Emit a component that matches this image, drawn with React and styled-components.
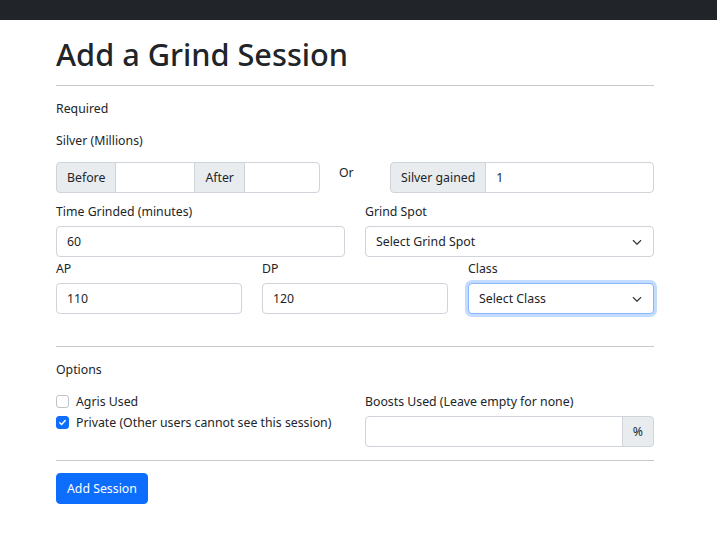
import React from "react";
import styled, { createGlobalStyle } from "styled-components";

const GlobalStyle = createGlobalStyle`
  html, body {
    margin: 0;
    padding: 0;
    background: #fff;
    font-family: "Noto Sans", "Open Sans", sans-serif;
    color: #212529;
    font-size: 12.3px;
  }
  * { box-sizing: border-box; }
`;

const Navbar = styled.div`
  height: 20px;
  background: #212529;
`;

const Container = styled.div`
  width: 598px;
  margin-left: 56px;
  display: flex;
  flex-direction: column;
`;

const Title = styled.h1`
  margin: 14px 0 0;
  font-size: 30.7px;
  line-height: 40px;
  font-weight: 500;
`;

const Rule = styled.hr`
  margin: ${(p) => p.$top || 12}px 0 0;
  border: 0;
  border-top: 1px solid #c8c9ca;
  height: 0;
`;

const Text = styled.div`
  margin-top: ${(p) => p.$top ?? 12}px;
  padding-top: 1px;
  line-height: 20px;
  height: 20px;
  white-space: nowrap;
`;

const SilverRow = styled.div`
  margin-top: 12px;
  display: grid;
  grid-template-columns: 264px 1fr 264px;
`;

const Group = styled.div`
  display: flex;
  height: 31px;
`;

const Addon = styled.span`
  display: flex;
  align-items: center;
  padding: 0 10px;
  background: #e9ecef;
  border: 1px solid #ced4da;
  border-radius: ${(p) => p.$radius || "0"};
  margin-left: ${(p) => (p.$first ? 0 : -1)}px;
  white-space: nowrap;
`;

const Field = styled.div`
  display: flex;
  align-items: center;
  padding: 0 10px;
  height: 31px;
  border: 1px solid ${(p) => (p.$focus ? "#86b7fe" : "#ced4da")};
  border-radius: ${(p) => p.$radius || "4px"};
  margin-left: ${(p) => (p.$inGroup ? -1 : 0)}px;
  width: ${(p) => (p.$width ? `${p.$width}px` : "auto")};
  flex: ${(p) => (p.$grow ? "1 1 auto" : "none")};
  background: #fff;
  box-shadow: ${(p) => (p.$focus ? "0 0 0 3px rgba(13,110,253,0.25)" : "none")};
  justify-content: space-between;
  white-space: nowrap;
`;

const Or = styled.div`
  padding: 1px 0 0 19px;
  line-height: 20px;
`;

const Grid = styled.div`
  display: grid;
  grid-template-columns: ${(p) => p.$cols};
  column-gap: 20px;
`;

const Col = styled.div`
  display: flex;
  flex-direction: column;
`;

const Label = styled.div`
  margin-top: ${(p) => p.$top ?? 8}px;
  padding-top: 1px;
  line-height: 20px;
  height: 20px;
  margin-bottom: 5px;
  white-space: nowrap;
`;

const Check = styled.label`
  display: flex;
  align-items: center;
  gap: 7px;
  height: 20px;
  margin-top: ${(p) => p.$top ?? 0}px;
  white-space: nowrap;
`;

const Box = styled.span`
  width: 13px;
  height: 13px;
  border-radius: 3px;
  border: 1px solid ${(p) => (p.$on ? "#0d6efd" : "#bfc4c9")};
  background: ${(p) => (p.$on ? "#0d6efd" : "#fff")};
  display: flex;
  align-items: center;
  justify-content: center;
`;

const Button = styled.button`
  margin-top: 12px;
  align-self: flex-start;
  height: 31px;
  padding: 0 10px;
  border: 1px solid #0d6efd;
  border-radius: 4px;
  background: #0d6efd;
  color: #fff;
  font: inherit;
`;

const Chevron = () => (
  <svg width="12" height="12" viewBox="0 0 16 16">
    <path d="M3 6l5 5 5-5" fill="none" stroke="#343a40" strokeWidth="1.5" strokeLinecap="round" strokeLinejoin="round" />
  </svg>
);

const Select = ({ children, focus }) => (
  <Field $focus={focus}>
    <span>{children}</span>
    <Chevron />
  </Field>
);

export default function App() {
  return (
    <>
      <GlobalStyle />
      <Navbar />
      <Container>
        <Title>Add a Grind Session</Title>
        <Rule $top={11} />
        <Text>Required</Text>
        <Text>Silver (Millions)</Text>
        <SilverRow>
          <Group>
            <Addon $first $radius="4px 0 0 4px">Before</Addon>
            <Field $inGroup $width={80} $radius="0" />
            <Addon>After</Addon>
            <Field $inGroup $grow $radius="0 4px 4px 0" />
          </Group>
          <Or>Or</Or>
          <Group>
            <Addon $first $radius="4px 0 0 4px">Silver gained</Addon>
            <Field $inGroup $grow $radius="0 4px 4px 0">1</Field>
          </Group>
        </SilverRow>
        <Grid $cols="1fr 1fr">
          <Col>
            <Label>Time Grinded (minutes)</Label>
            <Field>60</Field>
          </Col>
          <Col>
            <Label>Grind Spot</Label>
            <Select>Select Grind Spot</Select>
          </Col>
        </Grid>
        <Grid $cols="1fr 1fr 1fr">
          <Col>
            <Label $top={1}>AP</Label>
            <Field>110</Field>
          </Col>
          <Col>
            <Label $top={1}>DP</Label>
            <Field>120</Field>
          </Col>
          <Col>
            <Label $top={1}>Class</Label>
            <Select focus>Select Class</Select>
          </Col>
        </Grid>
        <Rule $top={32} />
        <Text>Options</Text>
        <Grid $cols="1fr 1fr">
          <Col>
            <Check $top={12}>
              <Box />
              Agris Used
            </Check>
            <Check $top={1}>
              <Box $on>
                <svg width="9" height="9" viewBox="0 0 10 10">
                  <path d="M2 5.2l2 2 4-4.4" fill="none" stroke="#fff" strokeWidth="1.6" strokeLinecap="round" strokeLinejoin="round" />
                </svg>
              </Box>
              Private (Other users cannot see this session)
            </Check>
          </Col>
          <Col>
            <Label $top={12}>Boosts Used (Leave empty for none)</Label>
            <Group>
              <Field $grow $radius="4px 0 0 4px" />
              <Addon $radius="0 4px 4px 0">%</Addon>
            </Group>
          </Col>
        </Grid>
        <Rule $top={13} />
        <Button>Add Session</Button>
      </Container>
    </>
  );
}
